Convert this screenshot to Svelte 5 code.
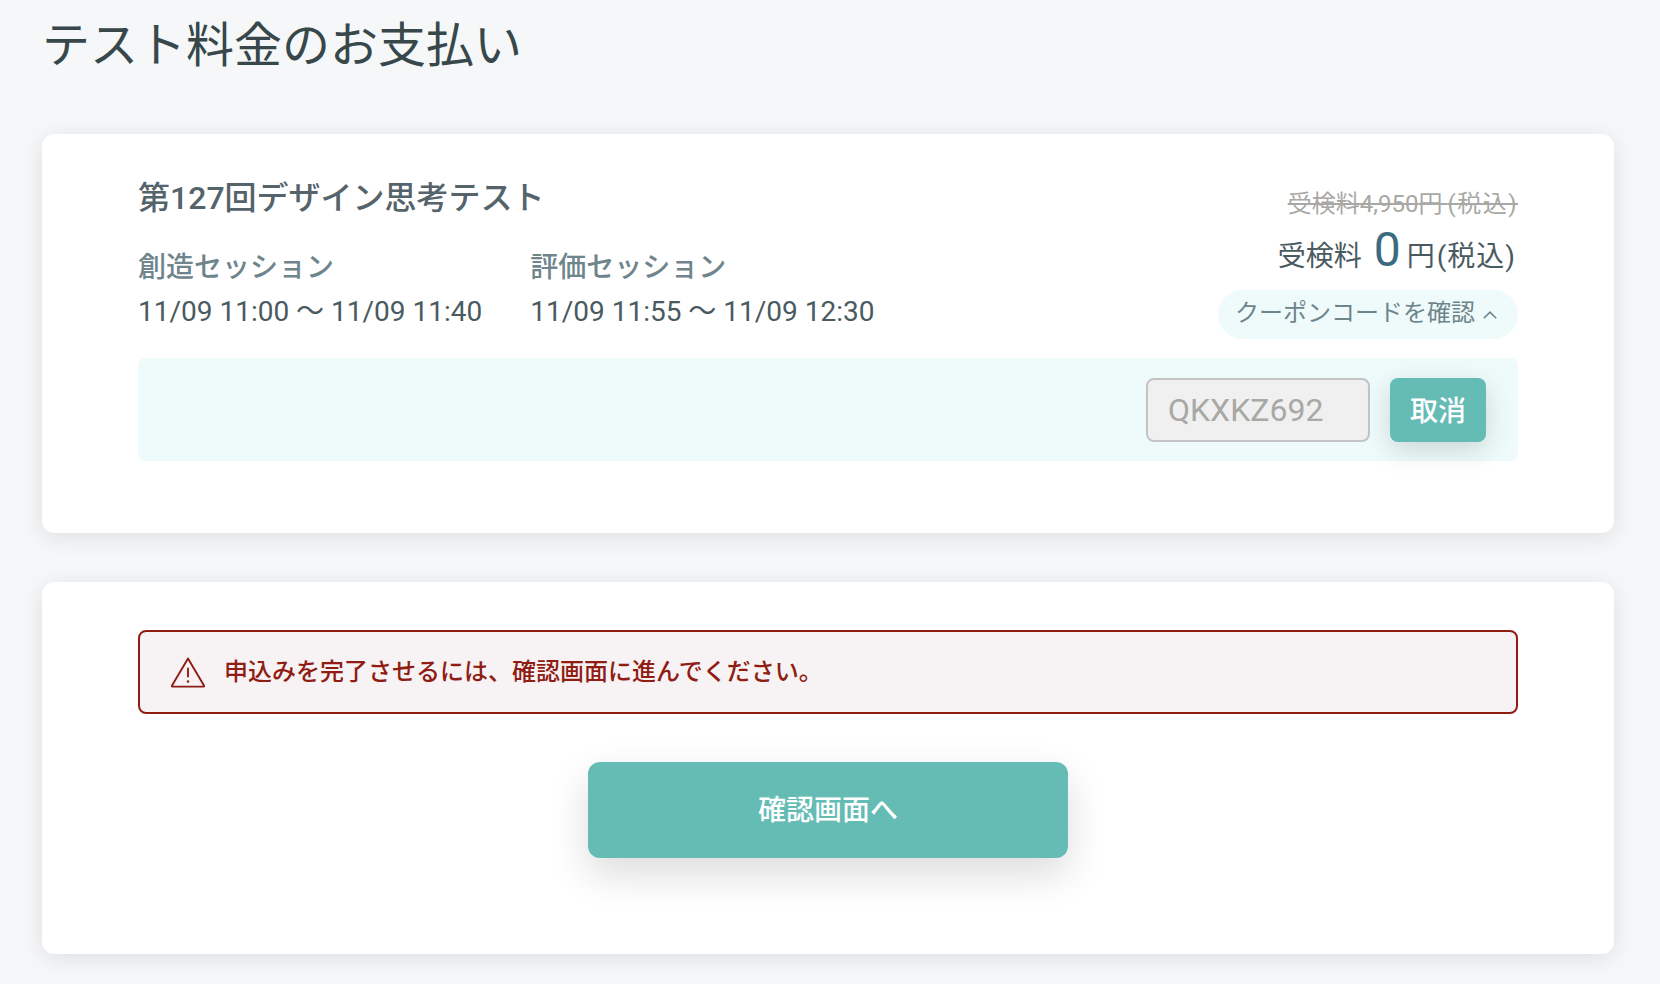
<script>
	const sessions = [
		{ label: '創造セッション', time: '11/09 11:00 〜 11/09 11:40' },
		{ label: '評価セッション', time: '11/09 11:55 〜 11/09 12:30' }
	];
</script>

<main class="page">
	<h1 class="page-title">テスト料金のお支払い</h1>

	<section class="card card--test">
		<div class="summary">
			<div class="summary__info">
				<h2 class="test-name">第127回デザイン思考テスト</h2>
				<div class="sessions">
					{#each sessions as { label, time }}
						<div class="session">
							<div class="session__label">{label}</div>
							<div class="session__time">{time}</div>
						</div>
					{/each}
				</div>
			</div>
			<div class="summary__price">
				<div class="price-old">受検料4,950<span class="price-old__yen">円</span><span class="price-old__tax">(税込)</span></div>
				<div class="price-now">
					<span>受検料</span><span class="price-now__num">0</span><span>円</span><span class="price-now__tax">(税込)</span>
				</div>
				<button class="coupon-toggle">
					<span class="coupon-toggle__text">クーポンコードを確認</span>
					<svg width="14" height="8" viewBox="0 0 14 8" fill="none" aria-hidden="true">
						<path d="M.8 7.2 7 1.2l6.2 6" stroke="currentColor" stroke-width="1.6" />
					</svg>
				</button>
			</div>
		</div>

		<div class="coupon-panel">
			<input class="coupon-input" value="QKXKZ692" disabled />
			<button class="btn btn--cancel">取消</button>
		</div>
	</section>

	<section class="card card--action">
		<div class="alert">
			<svg class="alert__icon" width="36" height="33" viewBox="0 0 38 34" fill="none" aria-hidden="true">
				<path d="M19 2.2 36 31a.6.6 0 0 1-.5.9H2.5a.6.6 0 0 1-.5-.9Z" stroke="currentColor" stroke-width="2" stroke-linejoin="round" />
				<path d="M19 12v10" stroke="currentColor" stroke-width="2" />
				<circle cx="19" cy="26.4" r="1.3" fill="currentColor" />
			</svg>
			<span class="alert__text">申込みを完了させるには、確認画面に進んでください。</span>
		</div>
		<button class="btn btn--confirm">確認画面へ</button>
	</section>
</main>

<style>
	:global(body) {
		background: #f5f7f9;
		font-family: Roboto, 'Noto Sans CJK JP', sans-serif;
		color: #3a4a4d;
	}
	.page {
		width: 1572px;
		min-height: 984px;
		margin-left: 42px;
	}
	.page-title {
		margin: 0;
		height: 134px;
		padding-top: 18px;
		box-sizing: border-box;
		font-size: 48px;
		line-height: 56px;
		font-weight: 400;
		color: #37474a;
	}
	.card {
		background: #fff;
		border-radius: 12px;
		box-shadow: 0 4px 24px rgba(0, 0, 0, 0.1);
		padding-left: 96px;
		padding-right: 96px;
		box-sizing: border-box;
	}
	.card--test {
		height: 399px;
		padding-top: 44px;
		margin-bottom: 49px;
	}
	.card--action {
		height: 372px;
		padding-top: 48px;
		display: flex;
		flex-direction: column;
		align-items: center;
	}
	.summary {
		display: flex;
		justify-content: space-between;
		height: 180px;
	}
	.test-name {
		margin: 0;
		font-size: 32px;
		line-height: 40px;
		font-weight: 500;
		color: #55636a;
	}
	.sessions {
		display: flex;
		gap: 48px;
		margin-top: 30px;
	}
	.session__label {
		font-size: 28px;
		line-height: 40px;
		font-weight: 500;
		color: #6f858c;
	}
	.session__time {
		margin-top: 4px;
		font-size: 28px;
		line-height: 40px;
		color: #4a5a61;
	}
	.summary__price {
		display: flex;
		flex-direction: column;
		align-items: flex-end;
	}
	.price-old {
		margin-top: 10px;
		font-size: 24px;
		line-height: 32px;
		color: #a8a8a4;
		text-decoration: line-through;
	}
	.price-old__yen {
		letter-spacing: 5px;
	}
	.price-old__tax {
		letter-spacing: 1.5px;
	}
	.price-now {
		display: flex;
		align-items: baseline;
		margin-top: 2px;
		font-size: 28px;
		line-height: 56px;
		color: #4a5a61;
	}
	.price-now__num {
		font-size: 48px;
		color: #3b6b80;
		margin: 0 6px 0 12px;
	}
	.price-now__tax {
		margin-left: 2px;
		padding-right: 2px;
		letter-spacing: 1px;
	}
	.coupon-toggle {
		margin-top: 5px;
		display: flex;
		align-items: center;
		gap: 8px;
		height: 49px;
		padding: 0 21px 0 17px;
		border: none;
		border-radius: 25px;
		background: #eefbfa;
		font: inherit;
		font-size: 24px;
		color: #6f858c;
	}
	.coupon-toggle__text {
		padding-bottom: 9px;
	}
	.coupon-panel {
		display: flex;
		justify-content: flex-end;
		gap: 20px;
		height: 103px;
		padding: 20px 32px;
		box-sizing: border-box;
		background: #eefbfa;
		border-radius: 8px;
	}
	.coupon-input {
		width: 224px;
		height: 64px;
		box-sizing: border-box;
		padding: 0 20px;
		border: 2px solid #c4c4c4;
		border-radius: 8px;
		background: #f0f0f0;
		font: inherit;
		font-size: 32px;
		color: #a8a8a4;
	}
	.btn {
		border: none;
		background: #64bcb5;
		color: #fff;
		font-family: inherit;
		font-weight: 500;
		font-size: 28px;
	}
	.btn--cancel {
		width: 96px;
		height: 64px;
		padding: 0 0 3px;
		border-radius: 8px;
		box-shadow: 0 8px 28px rgba(0, 0, 0, 0.15);
	}
	.alert {
		align-self: stretch;
		display: flex;
		align-items: center;
		gap: 18px;
		height: 84px;
		box-sizing: border-box;
		padding-left: 30px;
		border: 2px solid #8f1d14;
		border-radius: 8px;
		background: #f7f2f3;
		color: #8f1d14;
		font-size: 24px;
		font-weight: 500;
	}
	.alert__text {
		padding-bottom: 6px;
	}
	.btn--confirm {
		margin-top: 48px;
		width: 480px;
		height: 96px;
		padding: 0 0 4px;
		border-radius: 12px;
		box-shadow: 0 16px 40px rgba(0, 0, 0, 0.14);
	}
</style>
